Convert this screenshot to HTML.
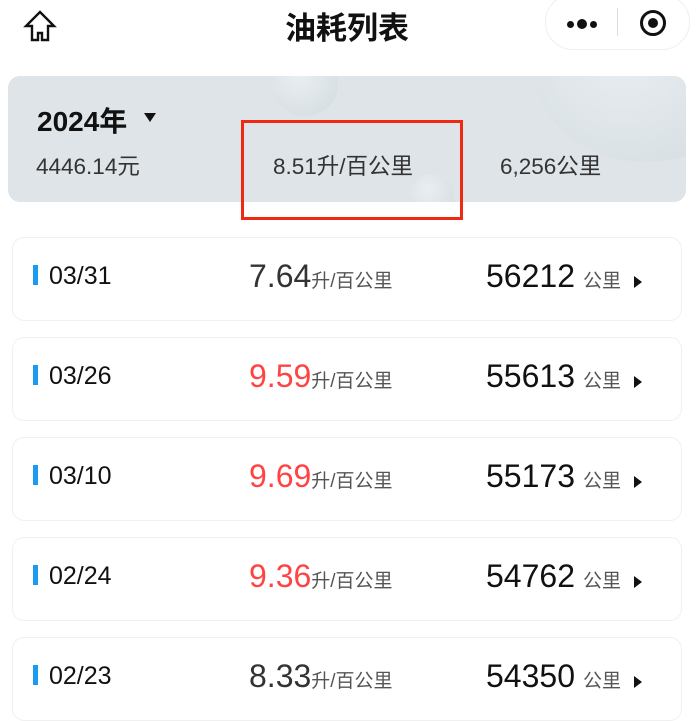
<!DOCTYPE html>
<html><head><meta charset="utf-8"><style>
*{margin:0;padding:0;box-sizing:border-box}
body{width:700px;height:685px;overflow:hidden;background:#fff;font-family:"Liberation Sans","Noto Sans CJK SC",sans-serif;position:relative;color:#111}
.abs{position:absolute}
.title{left:0;width:694px;text-align:center;top:3px;font-size:31px;font-weight:bold;color:#111}
.cap{left:545px;top:-6px;width:145px;height:56px;border:1px solid #eee;border-radius:28px;background:#fff}
.sum{left:8px;top:76px;width:678px;height:126px;background:#dee4e8;border-radius:12px;overflow:hidden}
.bub{position:absolute;border-radius:50%;background:radial-gradient(circle at 40% 35%,#e9eef1,#d3dbe0)}
.card{position:absolute;left:12px;width:670px;height:84px;border:1px solid #f0f0f0;border-radius:12px;background:#fff}
.bar{position:absolute;left:20px;top:27px;width:5px;height:20px;background:#1a9bef}
.date{position:absolute;left:36px;top:24px;font-size:25px;color:#111}
.val{position:absolute;left:236px;top:20px;font-size:32px;color:#333;white-space:nowrap}
.val.r{color:#f44}
.val span,.km span{font-size:19px;color:#555}
.km{position:absolute;right:60px;top:20px;font-size:32px;color:#111;white-space:nowrap}
.km span{margin-left:8px}
.tri{position:absolute;left:621px;top:38px;width:0;height:0;border-left:8px solid #111;border-top:6px solid transparent;border-bottom:6px solid transparent}
</style></head><body>
<svg class="abs" style="left:23px;top:9px" width="34" height="34" viewBox="0 0 34 34"><path d="M17 3 L3 17 H9 V31 H15 V24 H19 V31 H25 V17 H31 Z" fill="none" stroke="#111" stroke-width="2.4" stroke-linejoin="miter"/></svg>
<div class="abs title">油耗列表</div>
<div class="abs cap">
<div class="abs" style="left:21px;top:26px;width:7px;height:7px;border-radius:50%;background:#111"></div>
<div class="abs" style="left:31px;top:24px;width:10px;height:10px;border-radius:50%;background:#111"></div>
<div class="abs" style="left:44px;top:26px;width:7px;height:7px;border-radius:50%;background:#111"></div>
<div class="abs" style="left:71px;top:13px;width:1px;height:28px;background:#ddd"></div>
<div class="abs" style="left:94px;top:15px;width:26px;height:26px;border-radius:50%;border:3px solid #111"></div>
<div class="abs" style="left:102px;top:23px;width:10px;height:10px;border-radius:50%;background:#111"></div>
</div>
<div class="abs sum">
<div class="bub" style="left:264px;top:-22px;width:66px;height:62px"></div>
<div class="bub" style="left:528px;top:-90px;width:220px;height:176px"></div>
<div class="bub" style="left:402px;top:98px;width:44px;height:44px"></div>
<div class="abs" style="left:29px;top:24px;font-size:28px;font-weight:bold;color:#111">2024年</div>
<div class="abs" style="left:136px;top:37px;border-top:9px solid #111;border-left:6px solid transparent;border-right:6px solid transparent"></div>
<div class="abs" style="left:28px;top:73px;font-size:22.5px;color:#333">4446.14元</div>
<div class="abs" style="left:265px;top:73px;font-size:22.5px;color:#333">8.51升/百公里</div>
<div class="abs" style="left:492px;top:73px;font-size:22.5px;color:#333">6,256公里</div>
</div>
<div class="abs" style="left:241px;top:120px;width:222px;height:100px;border:3px solid #f02a12"></div>

<div class="card" style="top:237px"><div class="bar"></div><div class="date">03/31</div><div class="val">7.64<span>升/百公里</span></div><div class="km">56212<span>公里</span></div><div class="tri"></div></div>
<div class="card" style="top:337px"><div class="bar"></div><div class="date">03/26</div><div class="val r">9.59<span>升/百公里</span></div><div class="km">55613<span>公里</span></div><div class="tri"></div></div>
<div class="card" style="top:437px"><div class="bar"></div><div class="date">03/10</div><div class="val r">9.69<span>升/百公里</span></div><div class="km">55173<span>公里</span></div><div class="tri"></div></div>
<div class="card" style="top:537px"><div class="bar"></div><div class="date">02/24</div><div class="val r">9.36<span>升/百公里</span></div><div class="km">54762<span>公里</span></div><div class="tri"></div></div>
<div class="card" style="top:637px"><div class="bar"></div><div class="date">02/23</div><div class="val">8.33<span>升/百公里</span></div><div class="km">54350<span>公里</span></div><div class="tri"></div></div>
</body></html>
